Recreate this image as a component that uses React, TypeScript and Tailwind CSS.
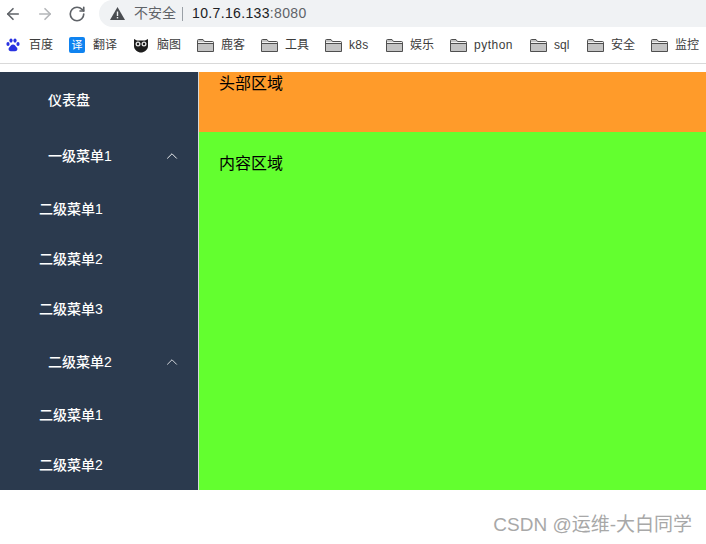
import { ArrowLeft, ArrowRight, RotateCw, ChevronUp } from "lucide-react"

const font = "font-['Liberation_Sans','Noto_Sans_CJK_SC',sans-serif]"

const bookmarks = [
  { label: "鹿客", w: "w-[64px]", text: "" },
  { label: "工具", w: "w-[64px]", text: "" },
  { label: "k8s", w: "w-[61px]", text: "tracking-[0.3px]" },
  { label: "娱乐", w: "w-[64px]", text: "" },
  { label: "python", w: "w-[80px]", text: "tracking-[0.5px]" },
  { label: "sql", w: "w-[57px]", text: "" },
  { label: "安全", w: "w-[64px]", text: "" },
  { label: "监控", w: "w-[55px]", text: "" },
]

function Folder() {
  return (
    <svg width="17" height="13" viewBox="0 0 17 13" className="shrink-0">
      <path d="M0.5 12.5V1.5Q0.5 0.5 1.5 0.5H6L7.5 2.5H15.5Q16.5 2.5 16.5 3.5V12.5Z" fill="#c4c4c4" stroke="#4f4f4f" />
      <path d="M1 4.5H16" stroke="#4f4f4f" />
      <path d="M1 3.5H16" stroke="#f2f2f2" />
    </svg>
  )
}

function Warning() {
  return (
    <svg width="15" height="13" viewBox="0 0 15 13" className="shrink-0">
      <path d="M7.5 0L15 13H0Z" fill="#4a4d51" />
      <rect x="6.8" y="4.5" width="1.4" height="4.5" fill="#f1f3f4" />
      <rect x="6.8" y="10" width="1.4" height="1.4" fill="#f1f3f4" />
    </svg>
  )
}

function SubItem({ label }: { label: string }) {
  return <div className="h-[50px] pl-[39px] flex items-center text-[14px] leading-none font-medium text-white">{label}</div>
}

function MenuTitle({ label, dim }: { label: string; dim?: boolean }) {
  return (
    <div className="h-[56px] pl-[48px] pr-[17px] flex items-center justify-between text-[14px] leading-none font-medium text-white">
      <span>{label}</span>
      {label !== "仪表盘" && <ChevronUp className={dim ? "text-gray-200" : "text-white"} size={18} strokeWidth={1.2} />}
    </div>
  )
}

export default function App() {
  return (
    <div className={`w-[706px] h-[544px] bg-white overflow-hidden flex flex-col ${font}`}>
      <div className="h-[27px] flex items-center shrink-0">
        <div className="w-[99px] pl-[4px] flex items-center gap-[14px] text-[#5f6368]">
          <ArrowLeft size={18} strokeWidth={2.2} />
          <ArrowRight size={18} strokeWidth={2.2} className="text-[#b4b6b9]" />
          <RotateCw size={18} strokeWidth={2.2} />
        </div>
        <div className="flex-1 h-full bg-[#f0f2f4] rounded-l-[14px] pl-[11px] flex items-center">
          <Warning />
          <span className="ml-[9px] text-[14px] text-[#5f6368]">不安全</span>
          <span className="ml-[6px] w-px h-[14px] bg-[#9aa0a6]" />
          <span className="ml-[9px] text-[14px] tracking-[0.35px] text-[#202124]">
            10.7.16.133<span className="text-[#5f6368]">:8080</span>
          </span>
        </div>
      </div>
      <div className="h-[37px] pl-[6px] flex items-center border-b border-[#d9d9d9] text-[12px] text-[#3c3c3c] shrink-0">
        <div className="w-[63px] shrink-0 flex items-center gap-[9px]">
          <svg width="14" height="14" viewBox="0 0 14 14" className="shrink-0">
            <g fill="#2932e1">
              <ellipse cx="2" cy="6" rx="1.6" ry="2" />
              <ellipse cx="5" cy="2.6" rx="1.6" ry="2.1" />
              <ellipse cx="9" cy="2.6" rx="1.6" ry="2.1" />
              <ellipse cx="12" cy="6" rx="1.6" ry="2" />
              <path d="M7 6.5C5 6.5 4.6 8.4 3.2 9.6C1.8 11 2.8 13.5 5 13.3C6 13.2 8 13.2 9 13.3C11.2 13.5 12.2 11 10.8 9.6C9.4 8.4 9 6.5 7 6.5Z" />
            </g>
          </svg>
          <span>百度</span>
        </div>
        <div className="w-[64px] shrink-0 flex items-center gap-[8px]">
          <span className="w-[16px] h-[16px] rounded-[2px] bg-[#0f83f0] text-white text-[11px] leading-none flex items-center justify-center shrink-0">译</span>
          <span>翻译</span>
        </div>
        <div className="w-[64px] shrink-0 flex items-center gap-[8px]">
          <svg width="16" height="16" viewBox="0 0 16 16" className="shrink-0">
            <path d="M1 2L4 3.5H12L15 2V9C15 13 11 15.5 8 15.5C5 15.5 1 13 1 9Z" fill="#1d1d1d" />
            <circle cx="5" cy="7" r="2.5" fill="#e5e5e5" />
            <circle cx="11" cy="7" r="2.5" fill="#e5e5e5" />
            <circle cx="5" cy="7" r="1.2" fill="#1d1d1d" />
            <circle cx="11" cy="7" r="1.2" fill="#1d1d1d" />
          </svg>
          <span>脑图</span>
        </div>
        {bookmarks.map((b) => (
          <div key={b.label} className={`${b.w} flex items-center gap-[7px] shrink-0`}>
            <Folder />
            <span className={b.text}>{b.label}</span>
          </div>
        ))}
      </div>
      <div className="h-[8px] shrink-0" />
      <div className="h-[418px] flex shrink-0">
        <div className="w-[198px] bg-[#2b3a4e] shrink-0">
          <MenuTitle label="仪表盘" />
          <MenuTitle label="一级菜单1" />
          <SubItem label="二级菜单1" />
          <SubItem label="二级菜单2" />
          <SubItem label="二级菜单3" />
          <MenuTitle label="二级菜单2" dim />
          <SubItem label="二级菜单1" />
          <SubItem label="二级菜单2" />
        </div>
        <div className="w-px bg-[#d4d8dc] shrink-0" />
        <div className="flex-1 flex flex-col text-[16px] leading-[24px] text-black">
          <div className="h-[60px] bg-[#ff9b2a] pl-[20px]">头部区域</div>
          <div className="flex-1 bg-[#63ff2f] pl-[20px] pt-[20px]">内容区域</div>
        </div>
      </div>
      <div className="flex-1 flex items-center justify-end pr-[14px] pt-[16px] text-[19px] text-[#a8a8a8]">CSDN @运维-大白同学</div>
    </div>
  )
}
